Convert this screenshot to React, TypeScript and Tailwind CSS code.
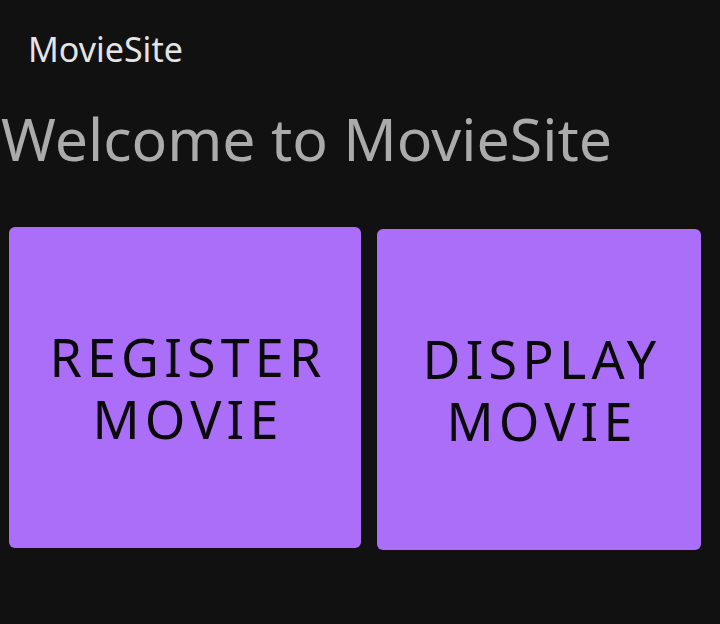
export default function App() {
  return (
    <div className="min-h-[624px] bg-[#111111] font-['Noto_Sans',sans-serif]">
      <header className="pl-[28px] pt-[24px]">
        <h1 className="text-[34px] leading-[50px] text-[#e4e4e4]">MovieSite</h1>
      </header>
      <h2 className="mt-[28px] pl-[1px] text-[59px] leading-[72px] text-[#ababab]">Welcome to MovieSite</h2>
      <div className="mt-[53px] flex items-start gap-4 pl-[9px]">
        <button className="flex h-[321px] w-[352px] flex-col items-center justify-center rounded-md bg-[#ab6ef8] pl-[6px] text-center text-[52px] leading-[62px] tracking-[0.1em] text-[#0a0a0a]">
          <span>REGISTER</span>
          <span>MOVIE</span>
        </button>
        <button className="mt-[2px] flex h-[321px] w-[324px] flex-col items-center justify-center rounded-md bg-[#ab6ef8] pl-[6px] text-center text-[52px] leading-[62px] tracking-[0.1em] text-[#0a0a0a]">
          <span>DISPLAY</span>
          <span>MOVIE</span>
        </button>
      </div>
    </div>
  );
}
